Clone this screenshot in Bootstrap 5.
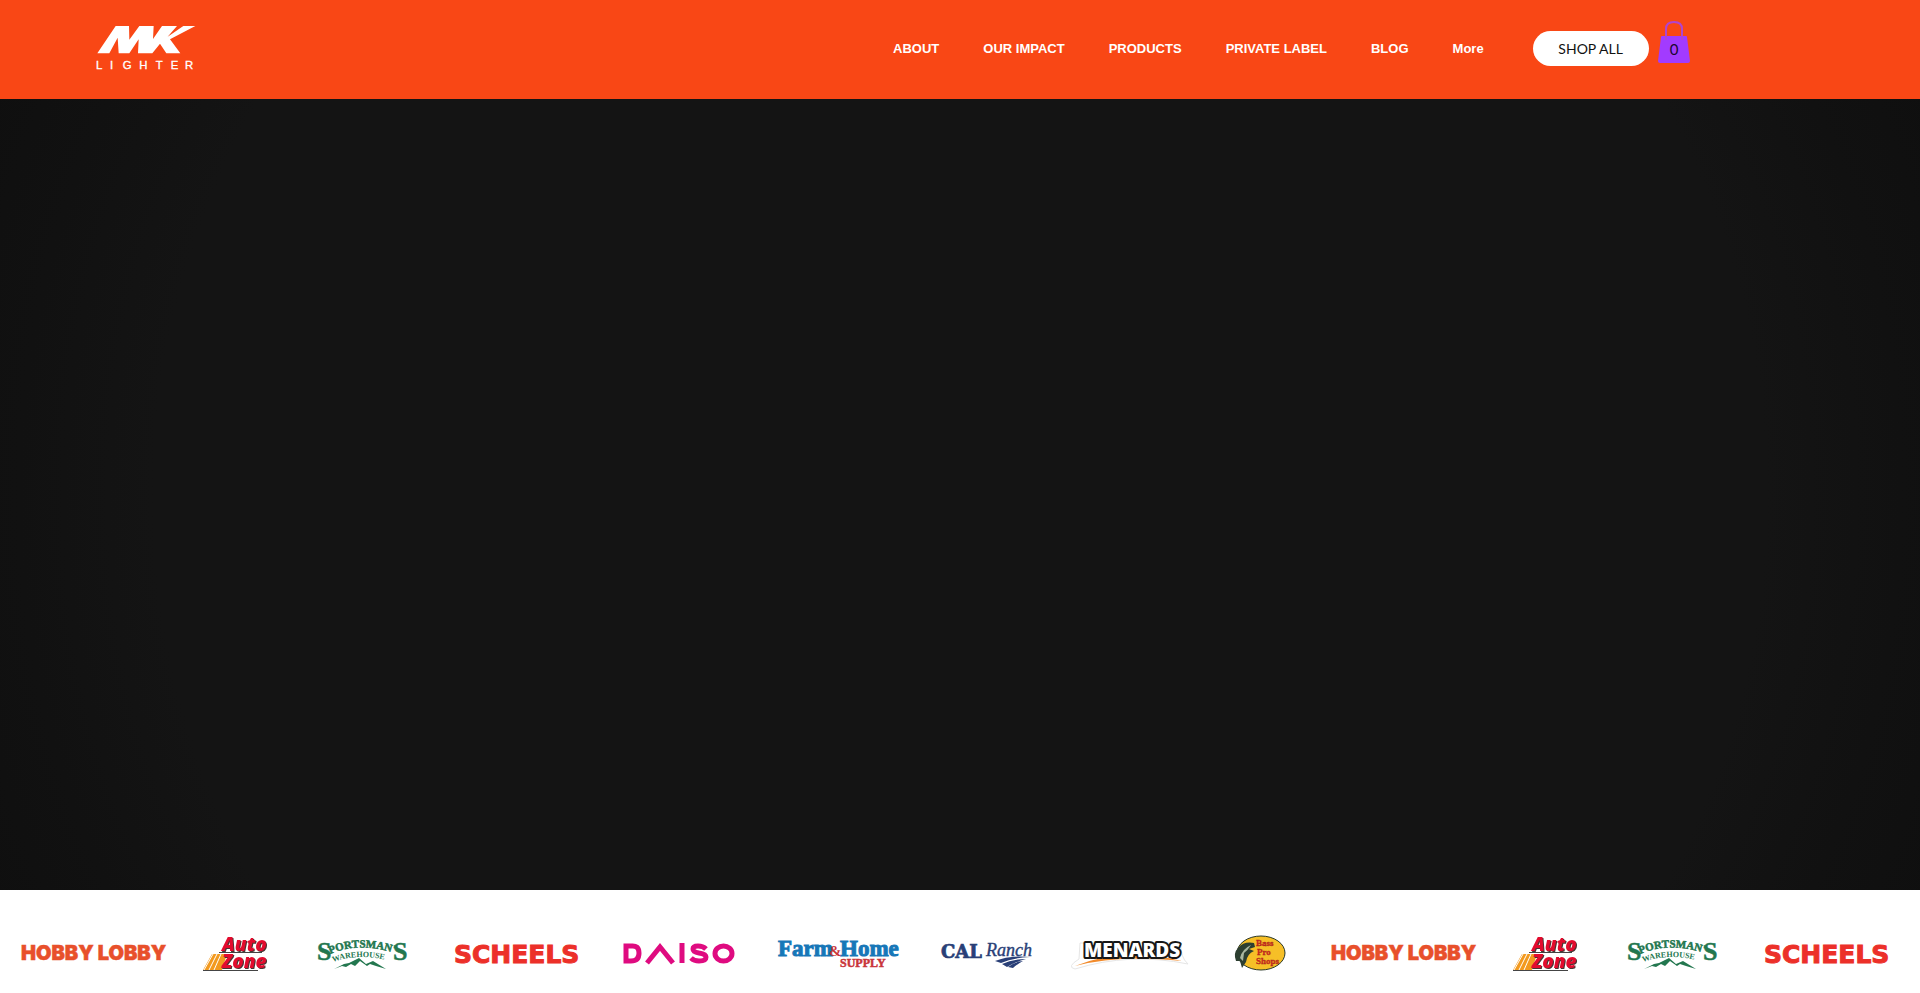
<!DOCTYPE html>
<html lang="en">
<head>
<meta charset="utf-8">
<meta name="viewport" content="width=device-width, initial-scale=1">
<title>MK Lighter</title>
<link href="https://cdn.jsdelivr.net/npm/bootstrap@5.3.0/dist/css/bootstrap.min.css" rel="stylesheet">
<style>
  body { font-family: "Liberation Sans", Arial, sans-serif; }
  .site-header { background: #f94715; padding: 0 12% 2px 5%; min-height: 99px; }
  .site-nav .nav-link { color: #fff; font-size: 13px; line-height: 20px; font-weight: 700; padding: 8px 22px; }
  .shop-btn { background: #fff; color: #111; border: 0; border-radius: 18px; width: 116px; height: 35px; padding: 0; margin-left: 27px; font: 400 14px/34px Lato, sans-serif; }
  .shop-btn:hover { background: #eee; }
  .cart-link { margin-left: 9px; }
  .hero-area { background: radial-gradient(ellipse 50% 120% at 50% 50%, #141414 84%, #111111 98%, #0f0f0f 110%); }
  .brand-strip { padding: 40px 0 13px; }
</style>
</head>
<body class="d-flex flex-column min-vh-100 overflow-x-hidden bg-white">

<header class="site-header d-flex align-items-center">
  <a href="#" aria-label="MK Lighter home" class="d-block">
    <svg class="d-block" width="100" height="49" viewBox="48 45 300 147" fill="#fff">
      <path d="M52 133L107 51H147L148 92L178 51H221L219 90L246 51H291L263 83L310 51H346L270 91L301 133H259L240 104L217 133H174L176 91L148 133H116L113 86L88 133Z"/>
      <text y="181" x="48 90 128 178 227 272 315" font-family="Liberation Sans" font-size="34" stroke="#fff" stroke-width="1">LIGHTER</text>
    </svg>
  </a>
  <nav class="nav site-nav ms-auto flex-nowrap" aria-label="Main">
    <a class="nav-link" href="#">ABOUT</a>
    <a class="nav-link" href="#">OUR IMPACT</a>
    <a class="nav-link" href="#">PRODUCTS</a>
    <a class="nav-link" href="#">PRIVATE LABEL</a>
    <a class="nav-link" href="#">BLOG</a>
    <a class="nav-link" href="#">More</a>
  </nav>
  <button type="button" class="btn shop-btn flex-shrink-0">SHOP ALL</button>
  <a href="#" class="cart-link" aria-label="Cart with 0 items">
    <svg class="d-block" width="32" height="56" viewBox="0 6 32 56">
      <path d="M4 21H28Q29 21 29 22L32 46Q32 48 30 48H2Q0 48 0 46L3 22Q3 21 4 21Z" fill="#a23bff"/>
      <path d="M8 25V14Q8 7 16 7T24 14V25" fill="none" stroke="#b044d0" stroke-width="2"/>
      <text x="16" y="40" text-anchor="middle" font-family="Lato" font-size="15" fill="#1a0630">0</text>
    </svg>
  </a>
</header>

<main class="hero-area flex-grow-1"></main>

<section class="brand-strip overflow-hidden" aria-label="Retail partners">
  <div class="d-flex flex-nowrap" id="brandTrack">
    <svg class="flex-shrink-0" width="184" height="50" viewBox="0 930 184 50" role="img" aria-label="Hobby Lobby">
      <text x="21" y="960" font-family="Inter" font-weight="900" font-size="20" fill="#e8502b" stroke="#e8502b" stroke-width=".5">HOBBY LOBBY</text>
    </svg>
    <svg class="flex-shrink-0" width="110" height="50" viewBox="184 930 110 50" role="img" aria-label="AutoZone">
      <path d="M203 970L212 954H227L222 970Z" fill="#f39a1f"/>
      <path d="M213 954L204 970M217 954L209 970M221 954L214 970" stroke="#fff" stroke-width="1"/>
      <path d="M219 952.500H262M203 970.500H258" stroke="#444" stroke-width="1"/>
      <g font-family="Open Sans" font-weight="800" font-style="italic" font-size="19" fill="#e30b2d" style="filter:drop-shadow(1px 1px 0 #4a3434)">
        <text x="222" y="951">Auto</text><text x="222" y="968">Zone</text>
      </g>
    </svg>
    <svg class="flex-shrink-0" width="136" height="50" viewBox="294 930 136 50" role="img" aria-label="Sportsman's Warehouse">
      <g font-family="Liberation Serif" font-weight="700" fill="#23774f" stroke="#23774f" stroke-width=".5">
        <text x="317" y="960" font-size="26">S</text>
        <path id="archTop" d="M330 954Q361 941 397 954" fill="none" stroke="none"/>
        <text><textPath href="#archTop" font-size="11">PORTSMAN'</textPath></text>
        <text x="393" y="960" font-size="26">S</text>
        <path id="archLow" d="M333 962Q361 952 393 962" fill="none" stroke="none"/>
        <text font-size="8" stroke="none"><textPath href="#archLow">WAREHOUSE</textPath></text>
      </g>
      <path d="M334 969L344 964L349 963L359 958L366 964L373 961L386 969L376 966L370 964L367 966L360 961L355 966L351 964L346 967L342 966Z" fill="#23774f"/>
    </svg>
    <svg class="flex-shrink-0" width="170" height="50" viewBox="430 930 170 50" role="img" aria-label="Scheels">
      <text x="454" y="963" font-family="DejaVu Sans" font-weight="700" font-size="25" fill="#ec3029" stroke="#ec3029" stroke-width="1">SCHEELS</text>
    </svg>
    <svg class="flex-shrink-0" width="156" height="50" viewBox="600 930 156 50" role="img" aria-label="Daiso">
      <g fill="none" stroke="#df0b80" stroke-width="5">
        <path d="M626 946V961H631Q639 961 639 953T631 946Z"/>
        <path d="M647 963L660 947L673 963M682 943V963"/>
        <path d="M706 949Q703 946 698 946Q693 946 693 949Q693 952 699 953Q706 954 706 957Q706 961 699 961Q694 961 691 958"/>
        <ellipse cx="723.500" cy="953.500" rx="8.500" ry="7.500"/>
      </g>
    </svg>
    <svg class="flex-shrink-0" width="164" height="50" viewBox="756 930 164 50" role="img" aria-label="Farm and Home Supply">
      <g font-family="Liberation Serif" font-weight="700">
        <g font-size="23" fill="#1777b8" stroke="#1777b8" stroke-width="1"><text x="778" y="956">Farm</text><text x="840" y="956">Home</text></g>
        <text x="829" y="956" font-size="15" fill="#c9353a">&amp;</text>
        <text x="840" y="967" font-size="12" fill="#c9353a" stroke="#c9353a" stroke-width=".5">SUPPLY</text>
      </g>
    </svg>
    <svg class="flex-shrink-0" width="131" height="50" viewBox="920 930 131 50" role="img" aria-label="Cal Ranch">
      <g fill="#293f77" stroke="#293f77"><text x="941" y="958" font-family="DejaVu Serif" font-weight="700" font-size="18" stroke-width=".7">CAL</text>
      <text x="986" y="956" font-family="Liberation Serif" font-style="italic" font-size="18" stroke-width=".4">Ranch</text></g>
      <path d="M995 961Q1010 955 1030 957Q1012 958 1001 963ZM1002 964Q1012 959 1026 959Q1015 962 1007 967ZM1008 967Q1014 962 1023 961Q1016 965 1013 968Z" fill="#293f77"/>
    </svg>
    <svg class="flex-shrink-0" width="161" height="50" viewBox="1051 930 161 50" role="img" aria-label="Menards">
      <path d="M1080 943L1079 959Q1066 967 1075 969Q1130 952 1188 964Q1180 957 1181 943Z" fill="#fff" stroke="#e6e6e6" stroke-width="1"/>
      <path d="M1075 966Q1122 947 1182 961Q1120 954 1075 966Z" fill="#f28b2c"/>
      <text x="1084" y="957" font-family="Open Sans" font-weight="800" font-size="19" fill="#fff" stroke="#171717" stroke-width="4" stroke-linejoin="round" paint-order="stroke">MENARDS</text>
    </svg>
    <svg class="flex-shrink-0" width="98" height="50" viewBox="1212 930 98 50" role="img" aria-label="Bass Pro Shops">
      <ellipse cx="1261" cy="953" rx="24" ry="17" fill="#f6bf27" stroke="#29382a" stroke-width="1"/>
      <path d="M1254 943Q1244 941 1238 948Q1233 953 1236 961L1240 961L1242 968L1246 962Q1247 954 1254 951L1249 949L1255 947Z" fill="#2d3f31"/>
      <path d="M1240 958Q1242 949 1251 945Q1248 950 1244 953L1243 961Z" fill="#a9b7a0"/>
      <g font-family="Liberation Serif" font-weight="700" font-size="9" fill="#d5281e" stroke="#a3241b" stroke-width=".3"><text x="1256" y="946">Bass</text><text x="1257" y="955">Pro</text><text x="1256" y="964">Shops</text></g>
    </svg>
  </div>
</section>

<script src="https://cdn.jsdelivr.net/npm/bootstrap@5.3.0/dist/js/bootstrap.bundle.min.js"></script>
<script>
  // Repeat the logos until the strip fills the window
  const track = document.getElementById('brandTrack');
  const logos = [...track.children];
  let filled = logos.reduce((sum, logo) => sum + logo.clientWidth, 0);
  for (let i = 0; filled + logos[i % logos.length].clientWidth <= window.innerWidth + 4; i++) {
    const logo = logos[i % logos.length];
    filled += logo.clientWidth;
    track.append(logo.cloneNode(true));
  }
</script>
</body>
</html>
